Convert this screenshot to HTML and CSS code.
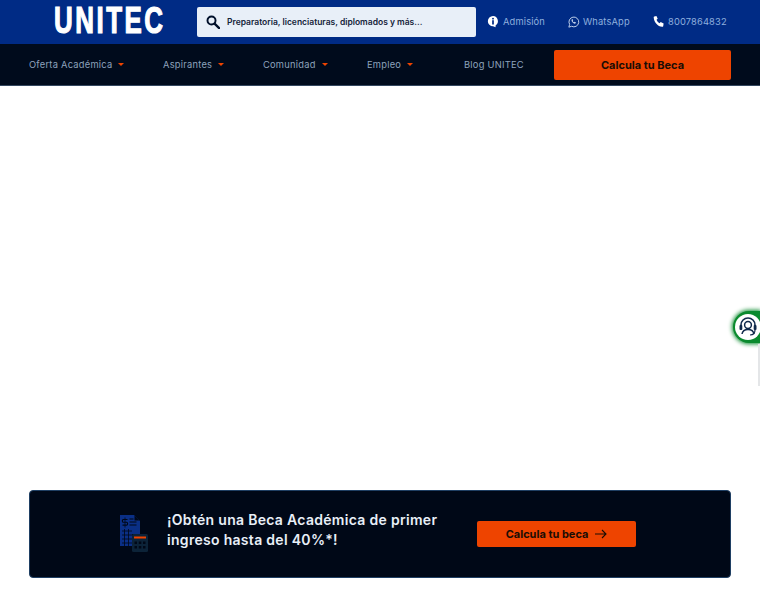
FILE: index.html
```html
<!DOCTYPE html>
<html lang="es">
<head>
<meta charset="utf-8">
<title>UNITEC</title>
<link rel="stylesheet" href="styles.css">
</head>
<body>
<header class="top">
  <div class="logo"><span class="logo-text">UNITEC</span></div>
  <div class="search">
    <svg class="search-icon" viewBox="0 0 16 16" width="14" height="14"><circle cx="6.300" cy="6.300" r="4.600" fill="none" stroke="#00102b" stroke-width="2.200"/><path d="M9.800 9.800 15 15" stroke="#00102b" stroke-width="2.600" stroke-linecap="round"/></svg>
    <span>Preparatoria, licenciaturas, diplomados y más...</span>
  </div>
  <a class="top-link admision">
    <svg viewBox="0 0 14 14" width="12" height="13"><path d="M7 .6a6 6 0 0 0-6 6 6 6 0 0 0 6 6l3 1.200v-2.200a6 6 0 0 0-3-11z" fill="#fff"/><rect x="6" y="5.500" width="2" height="5" fill="#002b85"/><rect x="6" y="2.800" width="2" height="1.800" fill="#002b85"/></svg>
    <span>Admisión</span>
  </a>
  <a class="top-link whatsapp">
    <svg viewBox="0 0 14 14" width="12" height="12"><path d="M1 13l.9-3.200A5.700 5.700 0 1 1 4.200 12z" fill="none" stroke="#c8d8ef" stroke-width="1.100"/><path d="M4.700 3.900c-1 .8-.6 2.200.5 3.500 1.200 1.300 2.700 2 3.700 1.100l.4-.8-1.500-.9-.7.600c-.7-.3-1.300-.9-1.700-1.700l.6-.7-.8-1.400z" fill="#c8d8ef"/></svg>
    <span>WhatsApp</span>
  </a>
  <a class="top-link phone">
    <svg viewBox="0 0 14 14" width="12" height="13"><path d="M1.500 1.200 4 .7l1.500 3-1.400 1.300c.7 1.700 1.800 3 3.500 3.900L9 7.600l3.400 1.600-.5 3.200c-.2.500-.6.800-1.200.7C5.500 12.600 1.300 7.800.8 2.200c0-.5.200-.9.700-1z" fill="#fff"/></svg>
    <span>8007864832</span>
  </a>
</header>
<nav class="nav">
  <a class="nav-item w-oferta">Oferta Académica<i class="caret"></i></a>
  <a class="nav-item w-aspirantes">Aspirantes<i class="caret"></i></a>
  <a class="nav-item w-comunidad">Comunidad<i class="caret"></i></a>
  <a class="nav-item w-empleo">Empleo<i class="caret"></i></a>
  <a class="nav-item w-blog">Blog UNITEC</a>
  <a class="nav-cta">Calcula tu Beca</a>
</nav>
<main class="main">
  <section class="banner">
    <svg class="banner-icon" viewBox="0 0 30 38" width="30" height="38">
      <path d="M1 1h14l6 6v13H13v12H1z" fill="#0a2f86"/>
      <path d="M15.500 1.500l5 5h-5z" fill="#000817"/>
      <path d="M6 3.500v10" stroke="#000817" stroke-width=".8"/>
      <path d="M8.500 5.500H4.500c-1.500 0-1.500 2.800 0 2.800h3c1.500 0 1.500 2.800 0 2.800H3.500" fill="none" stroke="#000817" stroke-width="1.100"/>
      <path d="M10.500 5h4M10.500 8h7M10.500 11h7" stroke="#000817" stroke-width="1"/>
      <path d="M3 17h10M3 21h10M3 25h10M3 29h10M5.500 15v17M9.500 15v17" stroke="#000817" stroke-width=".8"/>
      <rect x="13" y="20" width="16" height="18" rx="1.500" fill="#0c2338"/>
      <rect x="15" y="22.500" width="12" height="2" fill="#ee4400"/>
      <g fill="#000817"><rect x="15.500" y="27.500" width="2.500" height="2.500"/><rect x="19.800" y="27.500" width="2.500" height="2.500"/><rect x="24" y="27.500" width="2.500" height="2.500"/><rect x="15.500" y="32" width="2.500" height="2.500"/><rect x="19.800" y="32" width="2.500" height="2.500"/><rect x="24" y="32" width="2.500" height="2.500"/></g>
    </svg>
    <p class="banner-text">¡Obtén una Beca Académica de primer<br>ingreso hasta del 40%*!</p>
    <a class="banner-cta">Calcula tu beca
      <svg viewBox="0 0 12 10" width="12" height="10"><path d="M0 5h11M7 1l4 4-4 4" fill="none" stroke="#1a0d05" stroke-width="1.100"/></svg>
    </a>
  </section>
</main>
<aside class="float-help">
  <div class="float-circle">
    <svg viewBox="0 0 20 20" width="20" height="20">
      <circle cx="10" cy="8" r="3.400" fill="none" stroke="#10294b" stroke-width="1.500"/>
      <path d="M3 10V8a7 7 0 0 1 14 0v2" fill="none" stroke="#10294b" stroke-width="1.600"/>
      <rect x="1.500" y="8" width="2.800" height="5" rx="1" fill="#10294b"/>
      <rect x="15.700" y="8" width="2.800" height="5" rx="1" fill="#10294b"/>
      <path d="M4 17c.5-3 3-4.500 6-4.500s5.500 1.500 6 4.500" fill="none" stroke="#10294b" stroke-width="1.500"/>
      <path d="M17 13c0 3-2 5-5 5" fill="none" stroke="#10294b" stroke-width="1.200"/>
    </svg>
  </div>
</aside>
<div class="edge-strip"></div>
</body>
</html>
```

FILE: styles.css
```css
* { box-sizing: border-box; }
html, body { margin: 0; padding: 0; }
body {
  width: 760px;
  height: 600px;
  overflow: hidden;
  position: relative;
  background: #fff;
  font-family: Inter, "Noto Sans", sans-serif;
}
a { display: flex; align-items: center; text-decoration: none; }

.top {
  height: 44px;
  background: #002b85;
  display: flex;
  align-items: flex-start;
  padding-left: 54px;
}
.logo {
  width: 109px;
  height: 40px;
  white-space: nowrap;
}
.logo-text {
  display: inline-block;
  font-family: "Liberation Sans", sans-serif;
  font-weight: 700;
  font-size: 36px;
  line-height: 41px;
  letter-spacing: 3.500px;
  color: #fff;
  -webkit-text-stroke: 1.200px #fff;
  transform: scaleX(.72);
  transform-origin: left center;
}
.search {
  width: 279px;
  height: 30px;
  margin: 7px 0 0 34px;
  padding-left: 9px;
  background: #e8eff8;
  border-radius: 2px;
  display: flex;
  align-items: center;
  gap: 7px;
  font-size: 8.500px;
  font-weight: 600;
  color: #14233a;
  white-space: nowrap;
}
.top-link {
  height: 44px;
  font-size: 9.300px;
  letter-spacing: .16px;
  color: #8fb0de;
  gap: 4px;
  white-space: nowrap;
  padding-bottom: 1px;
}
.admision { margin-left: 11px; gap: 4px; width: 81px; }
.whatsapp { gap: 3px; width: 85px; }
.phone { gap: 3px; }

.nav {
  height: 42px;
  background: #000b1c;
  border-bottom: 1px solid #33475f;
  display: flex;
  align-items: center;
  padding-left: 29px;
}
.nav-item {
  font-size: 9.300px;
  letter-spacing: .25px;
  color: #8ea3bd;
  white-space: nowrap;
}
.w-oferta { width: 134px; }
.w-aspirantes { width: 100px; }
.w-comunidad { width: 104px; }
.w-empleo { width: 97px; }
.w-blog { width: 90px; }
.caret {
  width: 0;
  height: 0;
  margin-left: 6px;
  border: 3px solid transparent;
  border-top-color: #ee4400;
  border-bottom-width: 0;
}
.nav-cta {
  width: 177px;
  height: 30px;
  justify-content: center;
  background: #ee4400;
  border-radius: 2px;
  font-size: 11px;
  font-weight: 700;
  color: #1a0d05;
}

.main { padding: 404px 29px 0; }
.banner {
  width: 702px;
  height: 88px;
  background: #000817;
  border-radius: 4px;
  border: 1px solid #1f3f63;
  display: flex;
  align-items: center;
  padding-left: 89px;
}
.banner-icon { flex: none; margin-bottom: 2px; }
.banner-text {
  margin: 0 0 8px 18px;
  width: 310px;
  font-size: 14px;
  line-height: 20px;
  font-weight: 600;
  letter-spacing: .3px;
  color: #e8eff8;
  white-space: nowrap;
}
.banner-cta {
  width: 159px;
  height: 26px;
  justify-content: center;
  gap: 7px;
  background: #ee4400;
  border-radius: 2px;
  font-size: 11px;
  font-weight: 700;
  color: #1a0d05;
}

.float-help {
  position: absolute;
  left: 733px;
  top: 311px;
  width: 27px;
  height: 32px;
  border-radius: 16px 0 0 16px;
  background: #0a8a2e;
  box-shadow: 0 0 4px 1px #0a8a2e;
  display: flex;
  align-items: center;
  padding-left: 2px;
}
.float-circle {
  width: 26px;
  height: 26px;
  flex: none;
  border-radius: 50%;
  background: #fff;
  display: flex;
  align-items: center;
  justify-content: center;
}
.edge-strip {
  position: absolute;
  left: 758px;
  top: 344px;
  width: 2px;
  height: 42px;
  background: #e4e6e8;
}
```
